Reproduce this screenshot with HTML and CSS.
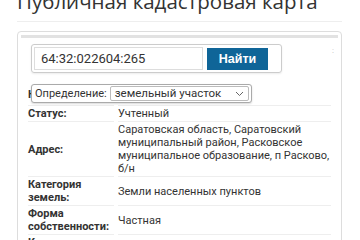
FILE: index.html
```html
<!DOCTYPE html>
<html lang="ru">
<head>
    <meta charset="UTF-8">
    <meta name="viewport" content="width=device-width, initial-scale=1.0">
    <title>Публичная кадастровая карта</title>
    <link rel="stylesheet" href="styles.css">
</head>
<body>
    <h1 class="page-title">Публичная кадастровая карта</h1>
    <hr class="title-rule">

    <div class="map-card">
        <div class="card-band"></div>
        <div class="card-body">
            <div class="search-row">
                <div class="search-box">
                    <input class="search-input" type="text" value="64:32:022604:265">
                    <button class="search-btn">Найти</button>
                </div>
                <span class="grip">:</span>
            </div>

            <table class="info-table">
                <tr class="def-row">
                    <th>Кадастровый номер:</th>
                    <td>64:32:022604:265
                        <!-- всплывающий выбор типа объекта -->
                        <div class="def-popup">
                            <span class="def-label">Определение:</span>
                            <span class="def-select">земельный участок
                                <svg class="chevron" width="9" height="6" viewBox="0 0 9 6"><path d="M1 1l3.5 3.5L8 1" fill="none" stroke="#666" stroke-width="1"/></svg>
                            </span>
                        </div>
                    </td>
                </tr>
                <tr>
                    <th>Статус:</th>
                    <td>Учтенный</td>
                </tr>
                <tr>
                    <th>Адрес:</th>
                    <td>Саратовская область, Саратовский муниципальный район, Расковское муниципальное образование, п Расково, б/н</td>
                </tr>
                <tr>
                    <th>Категория земель:</th>
                    <td>Земли населенных пунктов</td>
                </tr>
                <tr>
                    <th>Форма собственности:</th>
                    <td>Частная</td>
                </tr>
                <tr>
                    <th>Кадастровая стоимость:</th>
                    <td>104 542,56 руб.</td>
                </tr>
            </table>
        </div>
    </div>
</body>
</html>
```

FILE: styles.css
```css
body { margin: 0; padding: 0 18px 0 17px; background: #fff; font-family: Roboto, "Liberation Sans", Arial, sans-serif; color: #333; overflow: hidden; }
.page-title { font-family: "Open Sans", sans-serif; font-weight: 400; font-size: 20.5px; line-height: 28px; margin: -13px 0 0 0; color: #333; white-space: nowrap; }
.title-rule { border: none; border-top: 1px solid #eee; margin: 6px 0 9px 0; }
.map-card { border: 1px solid #ddd; border-radius: 4px; padding: 3px 3px 0 3px; height: 300px; }
.card-band { height: 3px; background: #e2e2e2; }
.card-body { padding: 6px 4px 0 10px; }
.search-row { display: flex; justify-content: space-between; align-items: flex-start; }
.search-box { display: flex; gap: 4px; align-items: center; border: 1px solid #ccc; border-radius: 3px; padding: 2px; width: 245px; box-shadow: 0 1px 2px rgba(0,0,0,0.08); }
.search-input { width: 169px; height: 23px; box-sizing: border-box; border: 1px solid #ddd; padding: 0 6px; font-family: Roboto, sans-serif; font-size: 13px; color: #333; }
.search-btn { width: 61px; height: 22px; background: #0f6598; color: #fff; border: none; font-family: "Liberation Sans", Arial, sans-serif; font-size: 12.5px; font-weight: bold; padding: 0; }
.grip { color: #bbb; font-size: 8px; margin-top: 2px; }
.info-table { border-collapse: separate; border-spacing: 4px 0; margin: 10px 0 0 -7px; width: 311px; font-size: 11px; line-height: 13px; }
.info-table th { text-align: left; font-weight: bold; width: 86px; padding: 1px 0; border-bottom: 1px solid #eee; vertical-align: middle; }
.info-table td { padding: 1px 0; border-bottom: 1px solid #eee; vertical-align: middle; }
.def-row th { white-space: nowrap; overflow: hidden; max-width: 86px; }
.def-row th, .def-row td { height: 20px; }
.def-row td { position: relative; }
.def-popup { position: absolute; left: -87px; top: 1px; display: flex; align-items: center; gap: 2px; background: #fff; border: 1px solid #aaa; border-radius: 3px; padding: 1px 2px; box-shadow: 0 1px 2px rgba(0,0,0,0.15); font-size: 11px; line-height: 13px; white-space: nowrap; }
.def-label { padding: 0 1px; }
.def-select { display: flex; align-items: center; justify-content: space-between; width: 139px; box-sizing: border-box; border: 1px solid #bbb; border-radius: 2px; padding: 0 4px; height: 15px; font-size: 11.5px; }
.chevron { margin-left: 6px; }
```
